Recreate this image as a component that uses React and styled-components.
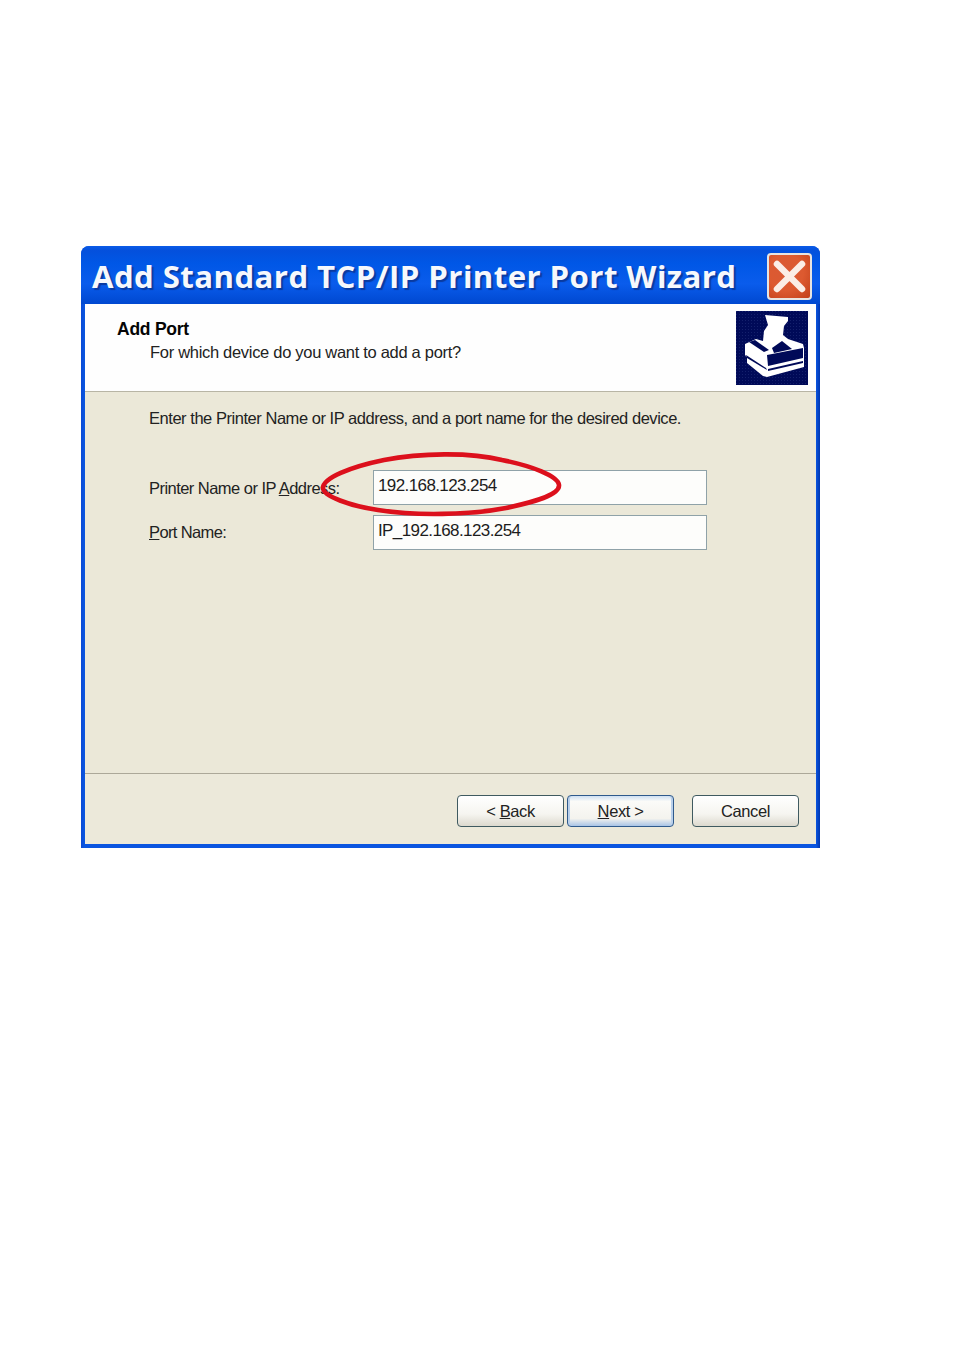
import React from "react";
import styled, { createGlobalStyle } from "styled-components";

const Global = createGlobalStyle`
  html, body { margin: 0; padding: 0; background: #fff; }
  body { font-family: "Liberation Sans", Arial, sans-serif; }
`;
const Page = styled.div`
  width: 954px; height: 1355px; box-sizing: border-box; padding: 246px 0 0 81px; background: #fff;
`;
const Window = styled.div`
  position: relative; width: 739px; height: 602px; display: flex; flex-direction: column;
  background: linear-gradient(90deg, #0a49d4 0, #0a55e0 3px, #0a55e0 calc(100% - 4px), #0036b0 100%);
  border-radius: 8px 8px 0 0; overflow: hidden;
`;
const TitleBar = styled.div`
  height: 58px; flex: none; display: flex; align-items: center; justify-content: space-between;
  padding: 0 8px 0 11px;
  background: linear-gradient(180deg, #0a5be8 0, #0450dc 8%, #0057e6 30%, #0a5cec 65%, #0048d0 100%);
`;
const Title = styled.h1`
  margin: 1px 0 0; font: bold 31.2px "Open Sans", "Noto Sans", sans-serif; letter-spacing: 0.41px;
  color: #f6f8fc; white-space: nowrap; text-shadow: 2px 2px 1px #0a3aa0;
`;
const CloseBtn = styled.div`
  width: 45px; height: 47px; box-sizing: border-box; border: 2px solid #e8e4e0; border-radius: 4px;
  background: radial-gradient(circle at 40% 40%, #d95a34 0, #dd5a30 50%, #c2401a 100%);
  display: flex; align-items: center; justify-content: center; margin-top: 2px;
`;
const Client = styled.div`
  flex: 1; margin: 0 4px 4px 4px; display: flex; flex-direction: column; min-height: 0;
`;
const Header = styled.div`
  height: 88px; flex: none; box-sizing: border-box; background: #fefefe; display: flex; justify-content: space-between;
  padding: 7px 8px 0 32px; border-bottom: 1px solid #b8b5a5;
`;
const HeaderText = styled.div`
  padding-top: 8px; color: #111;
`;
const HeaderTitle = styled.div`
  font-size: 17.5px; line-height: 20px; font-weight: bold; color: #050505; letter-spacing: -0.25px;
`;
const HeaderSub = styled.div`
  font-size: 16.5px; line-height: 20px; margin: 3px 0 0 33px; letter-spacing: -0.3px; color: #222;
`;
const Body = styled.div`
  flex: 1; background: #ebe8d8; padding: 16px 0 0 64px; border-bottom: 1px solid #aca899; min-height: 0;
  color: #222; font-size: 16.5px;
`;
const Intro = styled.div`
  line-height: 20px; letter-spacing: -0.46px; margin-bottom: 42px;
`;
const Form = styled.div`
  position: relative; display: flex; flex-direction: column; gap: 10px;
`;
const Row = styled.div`
  display: grid; grid-template-columns: 224px 334px; align-items: center;
`;
const Label = styled.div`
  letter-spacing: ${p => p.$tight ? "-0.62px" : "-0.54px"}; line-height: 20px;
  padding-bottom: ${p => p.$tight ? "1px" : "0"}; padding-top: ${p => p.$tight ? "0" : "1px"};
`;
const Key = styled.span`text-decoration: underline;`;
const TextBox = styled.div`
  height: 35px; box-sizing: border-box; background: #fdfdfb; border: 1px solid #8fa2a8;
  padding: 4px 0 0 4px; font-size: 17px; line-height: 22px; letter-spacing: -0.6px; color: #1c1c1c;
`;
const Ring = styled.svg`
  position: absolute; left: 171px; top: -18px; overflow: visible; pointer-events: none;
`;
const Footer = styled.div`
  height: 70px; flex: none; box-sizing: border-box; background: #ece9da; display: flex; justify-content: flex-end;
  align-items: flex-start; padding: 21px 17px 0 0;
`;
const Btn = styled.div`
  width: 107px; height: 32px; box-sizing: border-box; border: 1.5px solid ${p => p.$def ? "#2f5a8c" : "#3f5a60"};
  border-radius: 4px; margin-left: ${p => p.$gap}px;
  background: ${p => p.$def ? "linear-gradient(180deg,#cfe0f2 0,#fbfbf8 18%,#f4f3ee 75%,#a9c4e6 100%)" : "linear-gradient(180deg,#fff 0,#f6f5f0 60%,#dcd9ce 100%)"};
  box-shadow: ${p => p.$def ? "inset 2px 0 0 #b9d0ea, inset -2px 0 0 #b9d0ea" : "none"};
  display: flex; align-items: center; justify-content: center;
  font-size: 16.5px; letter-spacing: -0.4px; color: #222;
`;

function PrinterIcon() {
  const navy = "#000a58";
  return (
    <svg width="72" height="74" viewBox="0 0 72 74" style={{ flex: "none" }}>
      <defs>
        <pattern id="dots" width="3" height="3" patternUnits="userSpaceOnUse">
          <rect width="3" height="3" fill={navy} />
          <rect width="1" height="1" fill="#14206c" />
        </pattern>
      </defs>
      <rect width="72" height="74" fill="url(#dots)" />
      <path fill="#fff" d="M29 4 L52 6 L52 10 L48 15 L47 24 L52 28 L67 33 L68 37 L68 56 L31 66 L27 65 L11 52 L11 46 L9 44 L9 33 L20 28 L27 30 L28 20 L32 14 Z" />
      <path fill={navy} d="M36 37 L46 30 L56 38 L38 42 Z" />
      <path fill={navy} d="M13 31 L19 29 L33 39 L28 41 Z" />
      <path fill={navy} d="M31 44 L67 37 L67 47 L32 55 Z" />
      <path fill={navy} d="M10 44 L30 57 L31 59 L11 47 Z" />
      <path fill={navy} d="M32 58 L67 50 L67 52 L32 60 Z" />
    </svg>
  );
}

export default function App() {
  return (
    <Page>
      <Global />
      <Window>
        <TitleBar>
          <Title>Add Standard TCP/IP Printer Port Wizard</Title>
          <CloseBtn>
            <svg width="33" height="33" viewBox="0 0 33 33">
              <path d="M4 4 L29 29 M29 4 L4 29" stroke="#fbeee6" strokeWidth="6.5" strokeLinecap="round" />
            </svg>
          </CloseBtn>
        </TitleBar>
        <Client>
          <Header>
            <HeaderText>
              <HeaderTitle>Add Port</HeaderTitle>
              <HeaderSub>For which device do you want to add a port?</HeaderSub>
            </HeaderText>
            <PrinterIcon />
          </Header>
          <Body>
            <Intro>Enter the Printer Name or IP address, and a port name for the desired device.</Intro>
            <Form>
              <Row>
                <Label>Printer Name or IP <Key>A</Key>ddress:</Label>
                <TextBox>192.168.123.254</TextBox>
              </Row>
              <Row>
                <Label $tight><Key>P</Key>ort Name:</Label>
                <TextBox>IP_192.168.123.254</TextBox>
              </Row>
              <Ring width="245" height="66" viewBox="0 0 245 66">
                <path
                  d="M64 8 C100 1 150 0 182 8 C212 14 238 24 239 33 C240 43 214 50 186 56 C150 63 95 64 58 58 C30 54 3 44 3 36 C3 26 30 15 64 8 Z"
                  fill="none" stroke="#dc101c" strokeWidth="4.6"
                />
              </Ring>
            </Form>
          </Body>
          <Footer>
            <Btn $gap={0}><span>&lt; <Key>B</Key>ack</span></Btn>
            <Btn $gap={3} $def><span><Key>N</Key>ext &gt;</span></Btn>
            <Btn $gap={18}>Cancel</Btn>
          </Footer>
        </Client>
      </Window>
    </Page>
  );
}
